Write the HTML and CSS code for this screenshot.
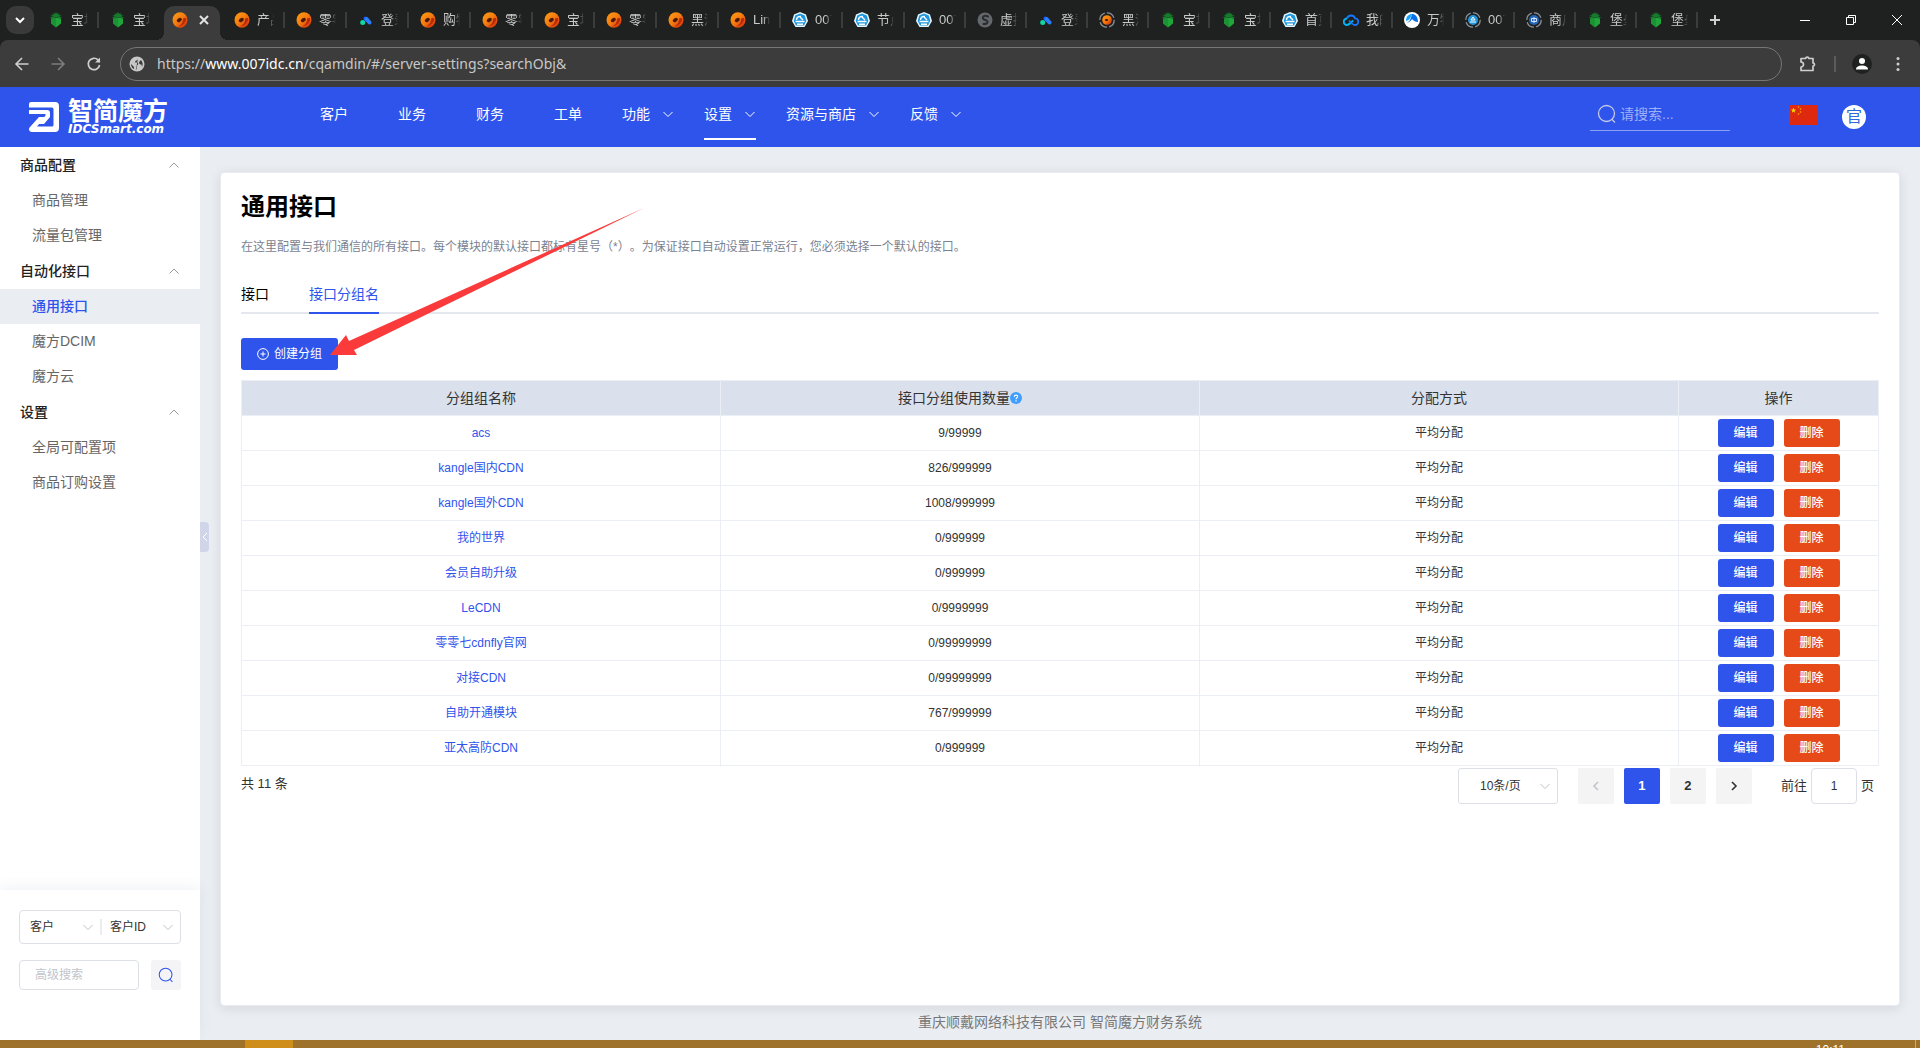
FILE: index.html
```html
<!DOCTYPE html>
<html lang="zh-CN">
<head>
<meta charset="utf-8">
<title>智简魔方 - 通用接口</title>
<link rel="stylesheet" href="styles.css">
</head>
<body>
<svg class="sprite" aria-hidden="true">
  <defs>
    <linearGradient id="g-orange" x1="0" y1="0" x2="1" y2="1"><stop offset="0" stop-color="#ffa012"/><stop offset=".5" stop-color="#f47a10"/><stop offset="1" stop-color="#cc220a"/></linearGradient>
  </defs>
  <symbol id="fav-bt" viewBox="0 0 16 16"><path fill="#157a2b" d="M8 0l1 1.500 3 .2-1.500 1L14 4l-3 .3L14.500 6 11 6 8 5 5 6H1.500L5 4.300 2 4l3.500-1.300L4 1.700l3-.2z"/><path fill="#20a53a" d="M3 6.500L8 5.500l5 1v5L8 15.500l-5-4z"/><path fill="#15802c" d="M3 6.500L8 5.500v10l-5-4z" opacity=".5"/></symbol>
  <symbol id="fav-orange" viewBox="0 0 16 16"><ellipse cx="8" cy="8" rx="7.500" ry="7.700" fill="url(#g-orange)"/><path fill="#b8280a" d="M14 6c.5 4-3 8-8 8.500C10 13 11.500 9 11 6.500z"/><ellipse cx="7.300" cy="8" rx="2.800" ry="1.800" fill="#4a1a08" transform="rotate(-35 7.300 8)"/></symbol>
  <symbol id="fav-cloud3" viewBox="0 0 16 16"><circle cx="4.700" cy="10.500" r="2.500" fill="#13d5a0"/><path stroke="#0e5cff" stroke-width="4" stroke-linecap="round" d="M7.500 6.500l1 1"/><path stroke="#2f7dff" stroke-width="4" stroke-linecap="round" d="M8.500 7l3 3.500"/></symbol>
  <symbol id="fav-hex" viewBox="0 0 16 16"><path fill="#e8f7ff" d="M8 0l6 2.500L16 9l-3.500 6h-9L0 9l2-6.500z"/><path fill="#1c96dc" d="M8 1.500l4.800 2L14.300 9 12 13.500H4L1.700 9l1.500-5.500z"/><path fill="none" stroke="#fff" stroke-width="1.400" d="M3.500 9.500h9M5 12.200h6M4.500 8c0-2.500 2-4 4.500-3.500M8 5l3 3"/></symbol>
  <symbol id="fav-globe" viewBox="0 0 16 16"><circle cx="8" cy="8" r="7.500" fill="#64676c"/><path fill="none" stroke="#2a2c2e" stroke-width="2" stroke-linecap="round" d="M11 4.500C8 3 5 4.500 6 6.500s4 1 4.500 3-1.500 2.500-4 2.500"/></symbol>
  <symbol id="fav-ring" viewBox="0 0 16 16"><circle cx="8" cy="8" r="7.200" fill="none" stroke="#8b9098" stroke-width="1.300" stroke-dasharray="9 2.200"/><circle cx="8" cy="8" r="4.800" fill="url(#g-orange)"/><ellipse cx="7.500" cy="8" rx="1.600" ry="1" fill="#3a1408"/></symbol>
  <symbol id="fav-ringblue" viewBox="0 0 16 16"><circle cx="8" cy="8" r="7.200" fill="none" stroke="#8b9098" stroke-width="1.300" stroke-dasharray="9 2.200"/><circle cx="8" cy="8" r="5" fill="#2396dd"/><path stroke="#fff" fill="none" d="M5 10h6M6 8l2-3 2 3z"/></symbol>
  <symbol id="fav-ringnavy" viewBox="0 0 16 16"><circle cx="8" cy="8" r="7.200" fill="none" stroke="#8b9098" stroke-width="1.300" stroke-dasharray="9 2.200"/><circle cx="8" cy="8" r="5" fill="#2466b8"/><path stroke="#cfe2ff" fill="none" d="M5.500 6.500h5v3h-5zM8 5v6"/></symbol>
  <symbol id="fav-loop" viewBox="0 0 16 16"><path fill="none" stroke="#00b7f5" stroke-width="1.800" d="M4 6.500a3.200 3.200 0 0 0 0 6.500c2 0 3-1.500 6-4.500"/><path fill="none" stroke="#1677ff" stroke-width="1.800" d="M4 6.500a4.200 4.200 0 0 1 8-.2A3.300 3.300 0 0 1 12 13c-2 0-3.500-1.500-6-4.500"/></symbol>
  <symbol id="fav-peak" viewBox="0 0 16 16"><circle cx="8" cy="8" r="8" fill="#fff"/><path fill="#18a5ff" d="M2 9c0-5 3-7 6-7-1 3-2 6-6 7z"/><path fill="#0a6fe8" d="M2 11c4-1 5-5 6-9 3 0 6 2.500 6 8-3 0-5-1.500-6-3-1 2-3 3.500-6 4z"/></symbol>
  <symbol id="chev-down" viewBox="0 0 12 12"><path fill="none" stroke="currentColor" d="M1.500 4L6 8.500 10.500 4"/></symbol>
  <symbol id="chev-up" viewBox="0 0 12 12"><path fill="none" stroke="currentColor" d="M1.500 8.500L6 4l4.500 4.500"/></symbol>
  <symbol id="search" viewBox="0 0 20 20"><circle cx="9.500" cy="9.500" r="8" fill="none" stroke="currentColor" stroke-width="1.300"/><path stroke="currentColor" stroke-width="1.300" d="M14.500 15l3.500 3.500"/></symbol>
</svg>

<div class="tabstrip">
  <button class="tab-search" aria-label="搜索标签页"><svg width="12" height="12" viewBox="0 0 12 12"><path fill="none" stroke="#fff" stroke-width="2" d="M2 4l4 4 4-4"/></svg></button>
  <div class="tabs">
    <button class="tab"><svg class="fav"><use href="#fav-bt"/></svg><span>宝塔</span></button>
    <button class="tab tab-before"><svg class="fav"><use href="#fav-bt"/></svg><span>宝塔</span></button>
    <button class="tab tab-active" aria-label="当前标签页"><svg class="fav"><use href="#fav-orange"/></svg><svg width="10" height="10" viewBox="0 0 10 10"><path stroke="#e3e3e3" stroke-width="2" d="M1 1l8 8M9 1L1 9"/></svg></button>
    <button class="tab"><svg class="fav"><use href="#fav-orange"/></svg><span>产品</span></button>
    <button class="tab"><svg class="fav"><use href="#fav-orange"/></svg><span>零零</span></button>
    <button class="tab"><svg class="fav"><use href="#fav-cloud3"/></svg><span>登录</span></button>
    <button class="tab"><svg class="fav"><use href="#fav-orange"/></svg><span>购物</span></button>
    <button class="tab"><svg class="fav"><use href="#fav-orange"/></svg><span>零零</span></button>
    <button class="tab"><svg class="fav"><use href="#fav-orange"/></svg><span>宝塔</span></button>
    <button class="tab"><svg class="fav"><use href="#fav-orange"/></svg><span>零零</span></button>
    <button class="tab"><svg class="fav"><use href="#fav-orange"/></svg><span>黑洞</span></button>
    <button class="tab"><svg class="fav"><use href="#fav-orange"/></svg><span>Linux</span></button>
    <button class="tab"><svg class="fav"><use href="#fav-hex"/></svg><span>007</span></button>
    <button class="tab"><svg class="fav"><use href="#fav-hex"/></svg><span>节点</span></button>
    <button class="tab"><svg class="fav"><use href="#fav-hex"/></svg><span>007</span></button>
    <button class="tab"><svg class="fav"><use href="#fav-globe"/></svg><span>虚拟</span></button>
    <button class="tab"><svg class="fav"><use href="#fav-cloud3"/></svg><span>登录</span></button>
    <button class="tab"><svg class="fav"><use href="#fav-ring"/></svg><span>黑洞</span></button>
    <button class="tab"><svg class="fav"><use href="#fav-bt"/></svg><span>宝塔</span></button>
    <button class="tab"><svg class="fav"><use href="#fav-bt"/></svg><span>宝塔</span></button>
    <button class="tab"><svg class="fav"><use href="#fav-hex"/></svg><span>首页</span></button>
    <button class="tab"><svg class="fav"><use href="#fav-loop"/></svg><span>我的</span></button>
    <button class="tab"><svg class="fav"><use href="#fav-peak"/></svg><span>万物</span></button>
    <button class="tab"><svg class="fav"><use href="#fav-ringblue"/></svg><span>007</span></button>
    <button class="tab"><svg class="fav"><use href="#fav-ringnavy"/></svg><span>商户</span></button>
    <button class="tab"><svg class="fav"><use href="#fav-bt"/></svg><span>堡垒</span></button>
    <button class="tab"><svg class="fav"><use href="#fav-bt"/></svg><span>堡垒</span></button>
  </div>
  <button class="new-tab" aria-label="新建标签页"><svg width="12" height="12" viewBox="0 0 12 12"><path stroke="#d0d0d0" stroke-width="2" d="M6 1v10M1 6h10"/></svg></button>
  <div class="win">
    <button aria-label="最小化"><svg width="12" height="12" viewBox="0 0 12 12"><path stroke="#fff" d="M1 6.500h10"/></svg></button>
    <button aria-label="还原"><svg width="12" height="12" viewBox="0 0 12 12"><path fill="none" stroke="#fff" d="M1.500 3.500h7v7h-7zM3.500 3.500v-2h7v7h-2"/></svg></button>
    <button aria-label="关闭"><svg width="12" height="12" viewBox="0 0 12 12"><path stroke="#fff" d="M1 1l10 10M11 1L1 11"/></svg></button>
  </div>
</div>

<div class="toolbar">
  <button class="tool" aria-label="后退"><svg width="16" height="16" viewBox="0 0 16 16"><path fill="none" stroke="#cfcfcf" stroke-width="1.600" d="M8 2L2 8l6 6M2 8h12.500"/></svg></button>
  <button class="tool" aria-label="前进"><svg width="16" height="16" viewBox="0 0 16 16"><path fill="none" stroke="#7c7c7c" stroke-width="1.600" d="M8 2l6 6-6 6M14 8H1.500"/></svg></button>
  <button class="tool" aria-label="刷新"><svg width="16" height="16" viewBox="0 0 16 16"><path fill="none" stroke="#cfcfcf" stroke-width="1.700" d="M13.600 9A5.700 5.700 0 1 1 12 3.900L13.800 6"/><path fill="#cfcfcf" d="M14 1.500v5H9z"/></svg></button>
  <div class="omnibox">
    <svg width="16" height="16" viewBox="0 0 16 16"><circle cx="8" cy="8" r="7.500" fill="#c7c7c7"/><path fill="#3c3c3c" d="M9 2C9 5 6 4 6 6.500h2.500c1 0 1 2 0 2.500s0 2-1 4.500C4 13.500 2 11 2 8l3 3v2l2 .5zM10 6c0 2 1 2.500 2.500 2.500L13 11c1-2 1-5-1-7z"/></svg>
    <div class="url">https://<b>www.007idc.cn</b>/cqamdin/#/server-settings?searchObj&amp;</div>
  </div>
  <button class="tool ext" aria-label="扩展程序"><svg width="18" height="18" viewBox="0 0 18 18"><path fill="none" stroke="#cfcfcf" stroke-width="1.700" stroke-linejoin="round" d="M2 3.500h4.500a1.800 1.800 0 0 1 3.500 0h4V8a1.500 1.500 0 0 1 0 3v4.500H2V12a2.300 2.300 0 0 0 0-5z"/></svg></button>
  <span class="tool-sep"></span>
  <button class="tool profile" aria-label="个人资料"><svg width="20" height="20" viewBox="0 0 20 20"><circle cx="10" cy="10" r="10" fill="#1f2020"/><circle cx="10" cy="7" r="3" fill="#fff"/><path fill="#fff" d="M4 15.500c0-3 3-4 6-4s6 1 6 4z"/></svg></button>
  <button class="tool more" aria-label="菜单"><svg width="16" height="16" viewBox="0 0 16 16"><g fill="#cfcfcf"><circle cx="8" cy="2.500" r="1.500"/><circle cx="8" cy="8" r="1.500"/><circle cx="8" cy="13.500" r="1.500"/></g></svg></button>
</div>

<header class="header">
  <a class="logo" href="#" aria-label="智简魔方 IDCSmart.com">
    <svg width="30" height="30" viewBox="0 0 30 30"><path fill="#fff" d="M2 0h24a4 4 0 0 1 4 4v22a4 4 0 0 1-4 4H3c-3 0-4-3-2-5l9-10h6l-8 9.500h15a1.500 1.500 0 0 0 1.500-1.500V7a1.500 1.500 0 0 0-1.500-1.500H0V2a2 2 0 0 1 2-2z"/><path fill="#fff" d="M0 8h18a3 3 0 0 1 3 3v4l-6 7H9.500l7-8.500V12H0z"/></svg>
    <span class="logo-text"><span class="logo-cn">智简魔方</span><span class="logo-en">IDCSmart.com</span></span>
  </a>
  <nav class="nav">
    <a href="#">客户</a>
    <a href="#">业务</a>
    <a href="#">财务</a>
    <a href="#">工单</a>
    <a class="drop" href="#">功能<svg class="chev"><use href="#chev-down"/></svg></a>
    <a class="drop current" href="#">设置<svg class="chev"><use href="#chev-down"/></svg></a>
    <a class="drop" href="#">资源与商店<svg class="chev"><use href="#chev-down"/></svg></a>
    <a class="drop" href="#">反馈<svg class="chev"><use href="#chev-down"/></svg></a>
  </nav>
  <label class="top-search"><svg width="20" height="20"><use href="#search"/></svg><input type="text" placeholder="请搜索..." aria-label="请搜索"></label>
  <button class="lang" aria-label="语言"><svg width="28" height="20" viewBox="0 0 28 20"><path fill="#de2910" d="M0 0h28v20H0z"/><path fill="#ffde00" d="M4.500 2.500l.7 2h2l-1.600 1.200.6 2-1.700-1.200-1.700 1.200.6-2L1.800 4.500h2z"/><g fill="#ffae00"><circle cx="9.500" cy="2" r=".8"/><circle cx="11.500" cy="4" r=".8"/><circle cx="11.500" cy="7" r=".8"/><circle cx="9.500" cy="9" r=".8"/></g></svg></button>
  <button class="avatar">官</button>
</header>

<div class="body">
  <aside class="sidebar">
    <nav class="menu">
      <button class="group">商品配置<svg class="chev"><use href="#chev-up"/></svg></button>
      <a href="#">商品管理</a>
      <a href="#">流量包管理</a>
      <button class="group">自动化接口<svg class="chev"><use href="#chev-up"/></svg></button>
      <a class="selected" href="#">通用接口</a>
      <a href="#">魔方DCIM</a>
      <a href="#">魔方云</a>
      <button class="group">设置<svg class="chev"><use href="#chev-up"/></svg></button>
      <a href="#">全局可配置项</a>
      <a href="#">商品订购设置</a>
    </nav>
    <form class="side-search">
      <div class="pair">
        <select aria-label="类型"><option>客户</option></select>
        <select aria-label="字段"><option>客户ID</option></select>
      </div>
      <div class="side-row">
        <input type="text" placeholder="高级搜索" aria-label="高级搜索">
        <button type="button" aria-label="搜索"><svg width="16" height="16"><use href="#search"/></svg></button>
      </div>
    </form>
    <button class="collapse" aria-label="收起"><svg width="6" height="10" viewBox="0 0 6 10"><path fill="none" stroke="#fff" d="M5 1L1 5l4 4"/></svg></button>
  </aside>

  <main class="main">
    <section class="card">
      <h1>通用接口</h1>
      <p class="desc">在这里配置与我们通信的所有接口。每个模块的默认接口都标有星号（*）。为保证接口自动设置正常运行，您必须选择一个默认的接口。</p>
      <div class="subtabs">
        <a href="#">接口</a>
        <a class="on" href="#">接口分组名</a>
      </div>
      <div class="actions">
        <button class="create"><svg width="12" height="12" viewBox="0 0 12 12"><circle cx="6" cy="6" r="5.400" fill="none" stroke="#fff"/><path stroke="#fff" d="M6 3.500v5M3.500 6h5"/></svg>创建分组</button>
        <svg class="pointer" width="314" height="148" viewBox="0 0 314 148" aria-hidden="true"><path fill="#fb3b3b" d="M314 0L24 142l3 5H0l16-20 3 6z"/></svg>
      </div>
      <table class="grid">
        <thead>
          <tr><th>分组组名称</th><th><span class="tip">接口分组使用数量<svg width="12" height="12" viewBox="0 0 12 12"><circle cx="6" cy="6" r="6" fill="#409eff"/><path fill="none" stroke="#fff" stroke-width="1.200" d="M4.300 4.700C4.300 2.500 7.700 2.500 7.700 4.600 7.700 5.800 6 5.700 6 7.200M6 8.200v1.300"/></svg></span></th><th>分配方式</th><th class="ops">操作</th></tr>
        </thead>
        <tbody>
          <tr><td><a href="#">acs</a></td><td>9/99999</td><td>平均分配</td><td><button class="edit">编辑</button><button class="del">删除</button></td></tr>
          <tr><td><a href="#">kangle国内CDN</a></td><td>826/999999</td><td>平均分配</td><td><button class="edit">编辑</button><button class="del">删除</button></td></tr>
          <tr><td><a href="#">kangle国外CDN</a></td><td>1008/999999</td><td>平均分配</td><td><button class="edit">编辑</button><button class="del">删除</button></td></tr>
          <tr><td><a href="#">我的世界</a></td><td>0/999999</td><td>平均分配</td><td><button class="edit">编辑</button><button class="del">删除</button></td></tr>
          <tr><td><a href="#">会员自助升级</a></td><td>0/999999</td><td>平均分配</td><td><button class="edit">编辑</button><button class="del">删除</button></td></tr>
          <tr><td><a href="#">LeCDN</a></td><td>0/9999999</td><td>平均分配</td><td><button class="edit">编辑</button><button class="del">删除</button></td></tr>
          <tr><td><a href="#">零零七cdnfly官网</a></td><td>0/99999999</td><td>平均分配</td><td><button class="edit">编辑</button><button class="del">删除</button></td></tr>
          <tr><td><a href="#">对接CDN</a></td><td>0/99999999</td><td>平均分配</td><td><button class="edit">编辑</button><button class="del">删除</button></td></tr>
          <tr><td><a href="#">自助开通模块</a></td><td>767/999999</td><td>平均分配</td><td><button class="edit">编辑</button><button class="del">删除</button></td></tr>
          <tr><td><a href="#">亚太高防CDN</a></td><td>0/999999</td><td>平均分配</td><td><button class="edit">编辑</button><button class="del">删除</button></td></tr>
        </tbody>
      </table>
      <div class="pager">
        <span class="total">共 11 条</span>
        <select class="size" aria-label="每页条数"><option>10条/页</option></select>
        <button class="pg off" aria-label="上一页"><svg width="12" height="12" viewBox="0 0 12 12"><path fill="none" stroke="currentColor" stroke-width="1.600" d="M8 2L4 6l4 4"/></svg></button>
        <button class="pg now">1</button>
        <button class="pg">2</button>
        <button class="pg" aria-label="下一页"><svg width="12" height="12" viewBox="0 0 12 12"><path fill="none" stroke="currentColor" stroke-width="1.600" d="M4 2l4 4-4 4"/></svg></button>
        <label class="jump">前往<input type="text" value="1">页</label>
      </div>
    </section>
    <footer class="foot">重庆顺戴网络科技有限公司 智简魔方财务系统</footer>
  </main>
</div>

<div class="taskbar"><span class="task-on"></span><time>10:11</time><span class="task-end"></span></div>
</body>
</html>
```
FILE: styles.css
```css
* { box-sizing: border-box; }
body {
  margin: 0;
  min-height: 100vh;
  display: flex;
  flex-direction: column;
  font: 14px/20px "Liberation Sans", "Noto Sans CJK SC", sans-serif;
  color: #333;
  background: #1f2120;
}
button, input, select { font: inherit; color: inherit; margin: 0; padding: 0; border: 0; background: none; }
button { cursor: pointer; }
a { color: inherit; text-decoration: none; }
svg { display: block; flex: none; }
.sprite { position: absolute; width: 0; height: 0; }
.chev { width: 12px; height: 12px; }

/* browser tab strip */
.tabstrip { flex: none; height: 40px; display: flex; align-items: center; background: #1f2120; font-size: 13px; color: #c9c9c9; }
.tab-search { width: 28px; height: 28px; margin: 0 3px 0 6px; border-radius: 10px; background: #3a3a3a; display: grid; place-items: center; }
.tabs { display: flex; height: 40px; min-width: 0; }
.tab { width: 62px; display: flex; align-items: center; padding-left: 11px; gap: 7px; }
.tab:nth-child(n+15) { width: 61px; }
.tab::after { content: ""; width: 2px; height: 16px; margin-left: auto; background: #3b3d3c; }
.tab-before::after { background: none; }
.tab span { width: 17px; overflow: hidden; white-space: nowrap; text-align: left; mask-image: linear-gradient(90deg, #000 60%, transparent); }
.fav { width: 16px; height: 16px; }
.tab-active { position: relative; width: 56px; margin: 6px 3px 0; padding: 0 0 6px 8px; gap: 11px; border-radius: 10px 10px 0 0; background: #3c3c3c; }
.tab-active::before, .tab-active::after { content: ""; position: absolute; bottom: 0; width: 8px; height: 8px; margin: 0; }
.tab-active::before { left: -8px; background: radial-gradient(circle at 0 0, transparent 8px, #3c3c3c 8px); }
.tab-active::after { right: -8px; background: radial-gradient(circle at 100% 0, transparent 8px, #3c3c3c 8px); }
.new-tab { width: 34px; height: 32px; display: grid; place-items: center; }
.win { margin-left: auto; display: flex; }
.win button { width: 46px; height: 40px; display: grid; place-items: center; }

/* browser toolbar */
.toolbar { flex: none; height: 47px; display: flex; align-items: center; padding: 0 4px; background: #3c3c3c; border-radius: 8px 8px 0 0; }
.tool { width: 36px; height: 34px; display: grid; place-items: center; }
.omnibox { flex: 1; height: 34px; margin-left: 8px; border: 1px solid #767676; border-radius: 17px; display: flex; align-items: center; gap: 12px; padding-left: 8px; }
.url { font: 14px/20px "Noto Sans", sans-serif; color: #c8c8c8; white-space: nowrap; }
.url b { font-weight: 400; color: #fff; }
.ext { margin-left: 8px; }
.tool-sep { width: 2px; height: 16px; margin: 0 8px; background: #5b5b5b; }

/* application header */
.header { flex: none; height: 60px; display: flex; align-items: flex-start; background: #2f54eb; color: #fff; }
.logo { width: 290px; height: 60px; display: flex; align-items: center; gap: 9px; padding-left: 29px; }
.logo-text { display: flex; flex-direction: column; }
.logo-cn { font: 700 25px/24px "Noto Sans CJK SC", sans-serif; }
.logo-en { font: italic 700 12px/16px "DejaVu Sans", sans-serif; }
.nav { display: flex; height: 52px; }
.nav a { height: 53px; margin: 0 25px; padding-top: 17px; white-space: nowrap; }
.nav a:first-child { margin-left: 30px; }
.nav .drop { display: flex; align-items: flex-start; gap: 12px; margin: 0 15px; border-bottom: 2px solid transparent; }
.nav .drop .chev { margin-top: 4px; }
.nav .current { border-color: #fff; }
.top-search { width: 140px; height: 44px; margin: 0 59px 0 auto; padding: 10px 0 0 7px; display: flex; align-items: center; gap: 3px; border-bottom: 1px solid #8d9ff0; color: #c3c9e6; }
.top-search input { width: 100px; outline: 0; }
.top-search input::placeholder { color: #9fb0f6; opacity: 1; }
.lang { margin-top: 18px; }
.avatar { width: 24px; height: 24px; margin: 18px 54px 0 25px; border-radius: 50%; background: #fff; color: #2f6bd8; font-size: 16px; line-height: 24px; }

.body { flex: 1; display: flex; background: #eaeef3; }

/* sidebar */
.sidebar { position: relative; width: 200px; flex: none; display: flex; flex-direction: column; background: #fff; }
.menu { flex: 1; display: flex; flex-direction: column; }
.menu a { height: 35px; line-height: 34px; padding-left: 32px; color: #666; }
.menu .group { height: 36px; display: flex; align-items: center; justify-content: space-between; padding: 0 20px; font-weight: 500; color: #222; }
.menu .group .chev { color: #999; }
.menu .selected { background: #eaeef3; color: #2f54eb; font-weight: 500; }
.side-search { height: 150px; padding: 20px 19px; display: flex; flex-direction: column; gap: 16px; font-size: 12px; box-shadow: 0 -4px 12px rgba(40, 60, 110, .06); }
select { appearance: none; background: url("data:image/svg+xml,%3Csvg xmlns='http://www.w3.org/2000/svg' width='12' height='12'%3E%3Cpath fill='none' stroke='%23c0c4cc' d='M1.500 4L6 8.500 10.500 4'/%3E%3C/svg%3E") no-repeat right 6px center; outline: 0; }
.pair { height: 34px; display: flex; align-items: center; border: 1px solid #dcdfe6; border-radius: 4px; }
.pair select { flex: 1; width: 50%; height: 16px; padding-left: 10px; line-height: 16px; color: #333; }
.pair select + select { border-left: 2px solid #ebebf0; padding-left: 8px; }
.side-row { display: flex; gap: 12px; align-items: center; }
.side-row input { width: 120px; height: 30px; padding-left: 15px; border: 1px solid #dcdfe6; border-radius: 4px; }
.side-row input::placeholder { color: #c0c4cc; opacity: 1; }
.side-row button { width: 30px; height: 30px; border-radius: 3px; background: #f4f4f7; color: #2f54eb; display: grid; place-items: center; }
.collapse { position: absolute; left: 100%; top: 375px; width: 9px; height: 30px; border-radius: 0 4px 4px 0; background: #d0d6e8; display: grid; place-items: center; }

/* content card */
.main { flex: 1; min-width: 0; display: flex; flex-direction: column; padding: 25px 20px 0; }
.card { flex: 1; padding: 20px; background: #fff; border: 1px solid #e8ebf2; border-radius: 4px; box-shadow: 0 2px 12px rgba(0, 0, 0, .1); }
h1 { margin: 0; font-size: 24px; line-height: 28px; color: #000; }
.desc { margin: 16px 0 0; font-size: 12px; line-height: 20px; color: #7b8290; text-spacing-trim: space-all; }
.subtabs { display: flex; gap: 40px; height: 57px; padding-top: 27px; border-bottom: 2px solid #e4e7ed; color: #000; }
.subtabs a { height: 30px; }
.subtabs .on { color: #2f54eb; border-bottom: 2px solid #2f54eb; }
.actions { position: relative; padding: 24px 0 10px; display: flex; }
.create { height: 32px; width: 97px; display: flex; align-items: center; justify-content: center; gap: 5px; border-radius: 3px; background: #2f54eb; color: #fff; font-size: 12px; }
.pointer { position: absolute; left: 89px; top: -106px; }
.grid { width: 100%; table-layout: fixed; border-collapse: collapse; text-align: center; font-size: 12px; }
.grid th, .grid td { height: 35px; padding: 0; border: 1px solid #ebeef5; }
.grid th { background: #dbe1ec; font-size: 14px; font-weight: 400; }
.grid .ops { width: 200px; }
.grid a { color: #2f54eb; }
.tip { display: inline-flex; align-items: center; }
.edit, .del { width: 56px; height: 28px; margin: 0 5px; border-radius: 3px; color: #fff; vertical-align: middle; font-weight: 500; }
.edit { background: #2f54eb; }
.del { background: #e64a19; }

.pager { display: flex; align-items: center; padding-top: 2px; }
.total { margin-right: auto; align-self: flex-start; font-size: 13px; line-height: 32px; }
.size { width: 100px; height: 36px; margin-right: 20px; padding-left: 21px; border: 1px solid #dcdfe6; border-radius: 3px; font-size: 12px; }
.pg { width: 36px; height: 36px; margin-right: 10px; border-radius: 2px; background: #f4f4f5; color: #303133; font-size: 13px; font-weight: 700; display: grid; place-items: center; }
.pg.now { background: #2f54eb; color: #fff; }
.pg.off { color: #c0c4cc; }
.jump { display: flex; align-items: center; gap: 4px; margin: 0 5px 0 19px; font-size: 13px; }
.jump input { width: 46px; height: 36px; border: 1px solid #dcdfe6; border-radius: 4px; text-align: center; font-size: 12px; }
.foot { height: 34px; line-height: 32px; text-align: center; color: #777; }

/* desktop taskbar edge */
.taskbar { flex: none; height: 8px; display: flex; overflow: hidden; background: #9f722b; color: #fff; font-size: 12px; line-height: 20px; }
.task-on { width: 48px; margin-left: 245px; background: #cf8e1a; }
.taskbar time { margin-left: auto; }
.task-end { width: 5px; margin-left: 70px; border-left: 1px solid #c9a978; }
```
